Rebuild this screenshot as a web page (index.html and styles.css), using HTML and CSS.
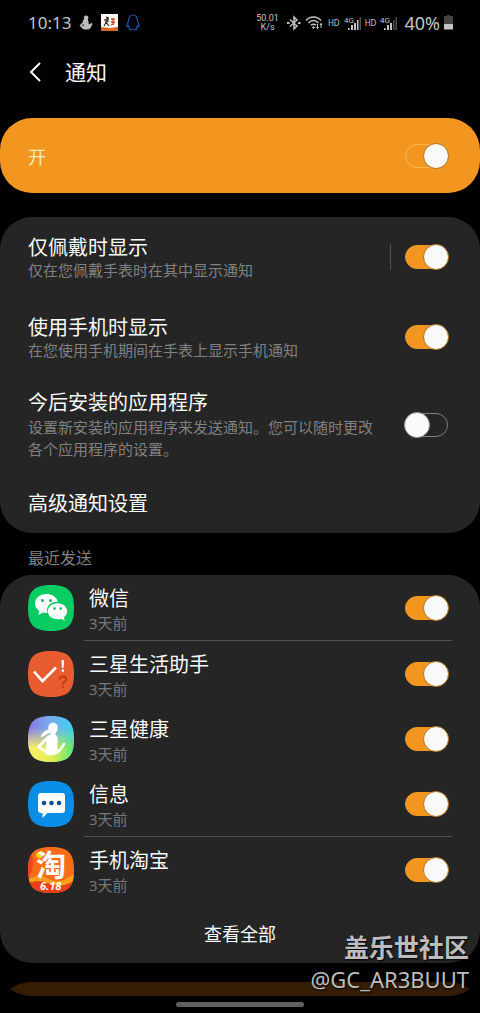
FILE: index.html
```html
<!DOCTYPE html>
<html lang="zh-CN">

<head>
    <meta charset="UTF-8">
    <meta name="viewport" content="width=device-width, initial-scale=1.0">
    <title>通知</title>
    <link rel="stylesheet" href="styles.css">
</head>

<body>
    <div class="status-bar">
        <div class="status-left">
            <span class="clock">10:13</span>
            <svg width="14" height="16" viewBox="0 0 14 16">
                <path fill="#bdbdbd" d="M7 0.500C9 0.500 9.800 2 9.300 3.600L8.800 5C10 6.500 9.500 8 9.800 9.500L12.500 8 13.500 9 11.500 13C10 15 4 15 3 13L0.500 10.500 4.200 6.800 3.500 5.500 5 4.500C4.500 2 5.300 0.500 7 0.500z"/>
                <path fill="#000" d="M4.700 9L3 10.300 4.500 11.300zM2.500 4.500l2-1.500v1z"/>
            </svg>
            <svg width="17" height="17" viewBox="0 0 17 17">
                <path fill="#fff8ee" d="M0 0h17v17H0z"/>
                <path fill="#d9692b" d="M0 13l8 1 9-1v4H0z"/>
                <path fill="none" stroke="#2b211c" stroke-width="1.100" d="M5 3l3 1M3 6l5-1M6 4v3l-3 5M5 8l3 4M8 7l-4 1"/>
                <path fill="none" stroke="#c8452a" stroke-width="1.300" d="M10 5h4M10 8h4M12 5v6M10 11l3-1"/>
            </svg>
            <svg width="14" height="17" viewBox="0 0 14 17">
                <path fill="none" stroke="#24559f" stroke-width="1.200" d="M7 1C4 1 2.800 3 2.800 5.500 2.800 8 1 9 1 12c0 1.500 1 1 1.600 0 .2 1 .7 1.700 1.200 2.200-1 .6-.8 1.600 1 1.600.9 0 1.700-.3 2.200-.7.500.4 1.300.7 2.200.7 1.800 0 2-1 1-1.600.5-.5 1-1.200 1.200-2.200.6 1 1.600 1.500 1.600 0 0-3-1.800-4-1.800-6.500C11.200 3 10 1 7 1z"/>
            </svg>
        </div>
        <div class="status-right">
            <span class="speed">50.01<br>K/s</span>
            <svg width="14" height="16" viewBox="0 0 14 16">
                <path fill="none" stroke="#c4c4c4" stroke-width="1.500" d="M3 4.500l7 6.500-3 3V2l3 3-7 6.500"/>
                <path fill="#c4c4c4" d="M0 7h2.500v2H0zM11 7h2.500v2H11z"/>
            </svg>
            <svg width="19" height="16" viewBox="0 0 19 16">
                <path fill="none" stroke="#c4c4c4" stroke-width="1.500" d="M1 5.500C5 .700 12 .700 16 5.500M3.500 8c3-3.200 7-3.200 10 0M6 10.300c1.500-1.500 3.500-1.500 5 0"/>
                <path fill="#c4c4c4" d="M7 12.500l1.500-1.500 1.500 1.500-1.500 1.500zM11 12h1v-3h1v3h1l-1.500 2.500zM14.500 10L16 7.500 17.500 10h-1v3h-1v-3z"/>
            </svg>
            <span class="hd">HD</span>
            <svg class="signal" width="17" height="16" viewBox="0 0 17 16">
                <text x="0" y="8">4G</text>
                <path fill="#c4c4c4" d="M4 13h1.500v2H4zM7 10h2v5H7zM10 8h2v7h-2zM13 5h1.500v10H13z"/>
                <path fill="#505050" d="M15.500 2H17v13h-1.500z"/>
            </svg>
            <span class="hd">HD</span>
            <svg class="signal" width="17" height="16" viewBox="0 0 17 16">
                <text x="0" y="8">4G</text>
                <path fill="#c4c4c4" d="M4 13h1.500v2H4zM7 10h2v5H7zM10 8h2v7h-2z"/>
                <path fill="#505050" d="M13 5h1.500v10H13zM15.500 2H17v13h-1.500z"/>
            </svg>
            <span class="battery-text">40%</span>
            <svg width="9" height="15" viewBox="0 0 9 15">
                <path fill="#444" d="M3 0h3v1h3v8H0V1h3z"/>
                <path fill="#c4c4c4" d="M0 9h9v5.500H0z"/>
            </svg>
        </div>
    </div>

    <header class="header">
        <button class="back" type="button" aria-label="返回">
            <svg width="14" height="20" viewBox="0 0 14 20">
                <path fill="none" stroke="#fff" stroke-width="2" d="M12 1L3 10l9 9"/>
            </svg>
        </button>
        <h1>通知</h1>
    </header>

    <main>
        <section class="card master">
            <label for="master">开</label>
            <input class="switch" type="checkbox" id="master" checked>
        </section>

        <section class="card settings">
            <div class="setting">
                <label class="setting-text" for="worn">
                    <span class="name">仅佩戴时显示</span>
                    <span class="desc">仅在您佩戴手表时在其中显示通知</span>
                </label>
                <span class="separator"></span>
                <input class="switch" type="checkbox" id="worn" checked>
            </div>
            <div class="setting">
                <label class="setting-text" for="using">
                    <span class="name">使用手机时显示</span>
                    <span class="desc">在您使用手机期间在手表上显示手机通知</span>
                </label>
                <input class="switch" type="checkbox" id="using" checked>
            </div>
            <div class="setting tall">
                <label class="setting-text" for="future">
                    <span class="name">今后安装的应用程序</span>
                    <span class="desc">设置新安装的应用程序来发送通知。您可以随时更改各个应用程序的设置。</span>
                </label>
                <input class="switch" type="checkbox" id="future">
            </div>
            <a class="advanced name" href="#">高级通知设置</a>
        </section>

        <h2>最近发送</h2>

        <section class="card">
            <ul class="apps">
                <li class="app">
                    <svg class="app-icon" viewBox="0 0 46 46">
                        <path fill="#07cc62" d="M23 0C40 0 46 6 46 23S40 46 23 46 0 40 0 23 6 0 23 0z"/>
                        <path fill="#fff" d="M18.500 9C11.800 9 7 13.300 7 18.500c0 3 1.600 5.500 4.200 7.200L10.500 30l4.500-2.600c1.500.4 3 .5 4.500.4C17.500 21 23 16.200 29.800 16.800 28.500 12 24 9 18.500 9z"/>
                        <path fill="#fff" d="M29.500 18.300c-5.500 0-9.700 3.600-9.700 8s4.200 8 9.700 8c1.300 0 2.600-.2 3.700-.6l3.500 2-.8-3.500c2-1.500 3.300-3.500 3.300-5.900 0-4.400-4.200-8-9.700-8z"/>
                        <g fill="#07b457">
                            <circle cx="14.500" cy="15.500" r="1.500"/>
                            <circle cx="22.500" cy="15.500" r="1.500"/>
                            <circle cx="26.500" cy="23.500" r="1.300"/>
                            <circle cx="32.700" cy="23.500" r="1.300"/>
                        </g>
                    </svg>
                    <div class="app-body">
                        <label class="app-text" for="wechat"><span class="name">微信</span><span class="time">3天前</span></label>
                        <input class="switch" type="checkbox" id="wechat" checked>
                    </div>
                </li>
                <li class="app">
                    <svg class="app-icon" viewBox="0 0 46 46">
                        <path fill="#e75d31" d="M23 0C40 0 46 6 46 23S40 46 23 46 0 40 0 23 6 0 23 0z"/>
                        <path fill="none" stroke="#fff" stroke-width="2.600" d="M6 20.500l8.500 9.500L28 16.500"/>
                        <path fill="#fff" d="M33.500 9h2.500l-.4 8h-1.700zM33.700 18.500h2.200v2.200h-2.200z"/>
                        <path fill="none" stroke="#c43d0c" stroke-width="2" d="M31.700 28.500c0-4 6.500-3.700 6.500 0 0 2.500-3.400 2.300-3.400 5"/>
                        <path fill="#c43d0c" d="M33.800 34.800h2v2h-2z"/>
                    </svg>
                    <div class="app-body">
                        <label class="app-text" for="assistant"><span class="name">三星生活助手</span><span class="time">3天前</span></label>
                        <input class="switch" type="checkbox" id="assistant" checked>
                    </div>
                </li>
                <li class="app">
                    <svg class="app-icon" viewBox="0 0 46 46">
                        <defs>
                            <linearGradient id="sky" x1="0" y1="0" x2="1" y2="0">
                                <stop offset="0" stop-color="#8b74e8"/>
                                <stop offset=".45" stop-color="#78a9ee"/>
                                <stop offset="1" stop-color="#40d2ee"/>
                            </linearGradient>
                            <linearGradient id="field" x1="0" y1="0" x2="1" y2="0">
                                <stop offset="0" stop-color="#fff06a"/>
                                <stop offset=".5" stop-color="#e2ed52"/>
                                <stop offset="1" stop-color="#5ee47b"/>
                            </linearGradient>
                            <linearGradient id="fade" x1="0" y1="0" x2="0" y2="1">
                                <stop offset=".25" stop-color="#000"/>
                                <stop offset=".7" stop-color="#fff"/>
                            </linearGradient>
                            <mask id="lower"><path fill="url(#fade)" d="M0 0h46v46H0z"/></mask>
                        </defs>
                        <path fill="url(#sky)" d="M23 0C40 0 46 6 46 23S40 46 23 46 0 40 0 23 6 0 23 0z"/>
                        <path fill="url(#field)" mask="url(#lower)" d="M23 0C40 0 46 6 46 23S40 46 23 46 0 40 0 23 6 0 23 0z"/>
                        <ellipse cx="25" cy="12" rx="4.800" ry="5.500" fill="#fff"/>
                        <path fill="#fff" d="M21.500 13.500l.5 3.500c-3 .2-4.500 3.500-9.500 4 1.500-4 4.500-7 9-7.500z"/>
                        <path fill="#fff" d="M22.500 16h5v3c1.500.8 2.300 2 2.300 4.500 0 3-1.300 5 0 9 1 3 .2 5.500-3.500 6.500-3 .7-7 .3-9-1-1.200-.8-1-2.500-.2-4.500 1.200-3 1.500-4.500 1.200-7.500-.3-4 .5-6.500 4.200-7.500z"/>
                        <path fill="none" stroke="#fff" stroke-width="2.600" stroke-linecap="round" stroke-linejoin="round" d="M19.500 21.500l-9 9.500 7.500 5M28 37c4-1.500 5.500-4.500 8-9"/>
                    </svg>
                    <div class="app-body">
                        <label class="app-text" for="health"><span class="name">三星健康</span><span class="time">3天前</span></label>
                        <input class="switch" type="checkbox" id="health" checked>
                    </div>
                </li>
                <li class="app">
                    <svg class="app-icon" viewBox="0 0 46 46">
                        <path fill="#088ee6" d="M23 0C40 0 46 6 46 23S40 46 23 46 0 40 0 23 6 0 23 0z"/>
                        <path fill="#fff" d="M13 12h21q3 0 3 3v14q0 3-3 3H19.500L14.500 37v-5H13q-3 0-3-3V15q0-3 3-3z"/>
                        <g fill="#104c9b">
                            <circle cx="16" cy="22" r="2.300"/>
                            <circle cx="23.500" cy="22" r="2.300"/>
                            <circle cx="31" cy="22" r="2.300"/>
                        </g>
                    </svg>
                    <div class="app-body">
                        <label class="app-text" for="messages"><span class="name">信息</span><span class="time">3天前</span></label>
                        <input class="switch" type="checkbox" id="messages" checked>
                    </div>
                </li>
                <li class="app">
                    <svg class="app-icon taobao" viewBox="0 0 46 46">
                        <defs>
                            <clipPath id="tile"><path d="M23 0C40 0 46 6 46 23S40 46 23 46 0 40 0 23 6 0 23 0z"/></clipPath>
                        </defs>
                        <g clip-path="url(#tile)">
                            <path fill="#f76d18" d="M0 0h46v46H0z"/>
                            <path fill="#ee4625" d="M0 5c8 4 5 16 2 23H0z"/>
                            <path fill="#ffa01d" d="M0 33c9-6 16-3 23 0s15 0 23-6v8c-9 5-17 5-24 2S8 33 0 37z"/>
                            <path fill="#ec401c" d="M0 36c9-3 15-2 22 1s15 2 24-3v12H0z"/>
                            <circle cx="11.500" cy="8" r="3.300" fill="#ffd400"/>
                        </g>
                        <text class="tao" x="8" y="29">淘</text>
                        <text class="sale" x="12" y="43">6.18</text>
                    </svg>
                    <div class="app-body">
                        <label class="app-text" for="taobao"><span class="name">手机淘宝</span><span class="time">3天前</span></label>
                        <input class="switch" type="checkbox" id="taobao" checked>
                    </div>
                </li>
            </ul>
            <button class="view-all" type="button">查看全部</button>
        </section>
    </main>

    <div class="next-card"></div>
    <div class="nav-handle"></div>

    <div class="watermark">
        <strong>盖乐世社区</strong>
        <span>@GC_AR3BUUT</span>
    </div>
</body>

</html>
```

FILE: styles.css
```css
*,
*::before {
    box-sizing: border-box;
}

body {
    position: relative;
    margin: 0;
    background-color: #000;
    color: #fafafa;
    font-family: "Noto Sans", "Noto Sans CJK SC", sans-serif;
}

svg {
    display: block;
    flex-shrink: 0;
}

/* status bar */
.status-bar {
    display: flex;
    justify-content: space-between;
    align-items: center;
    height: 45px;
    padding: 0 27px 0 28px;
    color: #c4c4c4;
}

.status-left,
.status-right {
    display: flex;
    align-items: center;
}

.status-left {
    gap: 8px;
}

.status-right {
    gap: 4px;
}

.clock {
    font-size: 17px;
}

.speed {
    margin-right: 4px;
    font-family: Roboto, sans-serif;
    font-size: 9px;
    line-height: 9px;
    text-align: center;
}

.hd {
    font-size: 8px;
}

.signal {
    overflow: visible;
}

.signal text {
    fill: #c4c4c4;
    font-family: Roboto, sans-serif;
    font-size: 8px;
}

.battery-text {
    margin-left: 3px;
    font-size: 18px;
}

/* header */
.header {
    display: flex;
    align-items: center;
    height: 53px;
    margin-bottom: 20px;
    padding: 0 28px;
}

.back {
    width: 37px;
    padding: 0;
    border: 0;
    background: none;
}

h1 {
    margin: 0;
    font-size: 21px;
    font-weight: 400;
    line-height: 30px;
}

h2 {
    margin: 0;
    padding: 8px 28px 0;
    color: #808080;
    font-size: 16px;
    font-weight: 400;
    line-height: 34px;
}

.card {
    border-radius: 32px;
    background-color: #252525;
}

.master {
    display: flex;
    justify-content: space-between;
    align-items: center;
    height: 75px;
    margin-bottom: 24px;
    padding: 0 32px 0 28px;
    background-color: #f2961f;
    color: #ffeac0;
    font-size: 18px;
}

.setting {
    display: flex;
    align-items: center;
    min-height: 80px;
    padding: 0 32px 0 28px;
}

.setting-text {
    flex: 1;
    padding-right: 24px;
}

.name {
    display: block;
    color: #fafafa;
    font-size: 20px;
    line-height: 26px;
}

.desc {
    display: block;
    color: #808080;
    font-size: 15px;
    line-height: 18px;
}

.tall {
    min-height: 95px;
}

.tall .desc {
    line-height: 22px;
}

.separator {
    width: 1px;
    height: 26px;
    margin-right: 14px;
    background-color: #505050;
}

.advanced {
    padding: 19px 28px 16px;
    text-decoration: none;
}

/* switch */
.switch {
    appearance: none;
    flex-shrink: 0;
    width: 43px;
    height: 24px;
    margin: 0;
    border: 1px solid #808080;
    border-radius: 12px;
}

.switch::before {
    content: "";
    display: block;
    width: 26px;
    height: 26px;
    margin: -2px;
    border: 1px solid #999;
    border-radius: 50%;
    background-color: #fafafa;
}

.switch:checked {
    border-color: #f2961f;
    background-color: #f2961f;
}

.switch:checked::before {
    margin-left: 17px;
    border-color: #b0741c;
}

.master .switch {
    border-color: #f9b55c;
}

/* app list */
.apps {
    margin: 0;
    padding: 0;
    list-style: none;
}

.app {
    display: flex;
    align-items: center;
    gap: 10px;
    padding: 0 28px;
}

.app-icon {
    width: 46px;
    height: 46px;
}

.app-body {
    display: flex;
    flex: 1;
    align-items: center;
    min-height: 65px;
    padding: 0 4px 0 5px;
}

.app:nth-child(3n + 1) .app-body {
    min-height: 66px;
    border-bottom: 1px solid #505050;
}

.app-text {
    flex: 1;
    padding-top: 5px;
}

.time {
    display: block;
    color: #75787a;
    font-size: 15px;
    line-height: 22px;
}

.taobao {
    overflow: visible;
}

.taobao text {
    fill: #fff;
    font-weight: 700;
}

.taobao .tao {
    font-size: 30px;
}

.taobao .sale {
    font-size: 11px;
    font-style: italic;
}

.view-all {
    display: block;
    width: 100%;
    height: 61px;
    padding: 0;
    border: 0;
    background: none;
    color: #fafafa;
    font-family: inherit;
    font-size: 18px;
}

/* bottom */
.next-card {
    height: 14px;
    margin: 19px 10px 6px;
    background-color: #341d03;
    clip-path: polygon(0 50%, 8px 18%, 18px 0, calc(100% - 18px) 0, calc(100% - 8px) 18%, 100% 50%, calc(100% - 8px) 82%, calc(100% - 18px) 100%, 18px 100%, 8px 82%);
}

.nav-handle {
    width: 128px;
    height: 5px;
    margin: 0 auto 6px;
    border-radius: 3px;
    background-color: #606060;
}

.watermark {
    position: absolute;
    right: 11px;
    bottom: 18px;
    color: #bdbdbd;
    text-align: right;
    text-shadow: 1px 1px 2px #000;
}

.watermark strong,
.watermark span {
    display: block;
    font-size: 25px;
    line-height: 32px;
}

.watermark span {
    font-size: 22px;
}
```
